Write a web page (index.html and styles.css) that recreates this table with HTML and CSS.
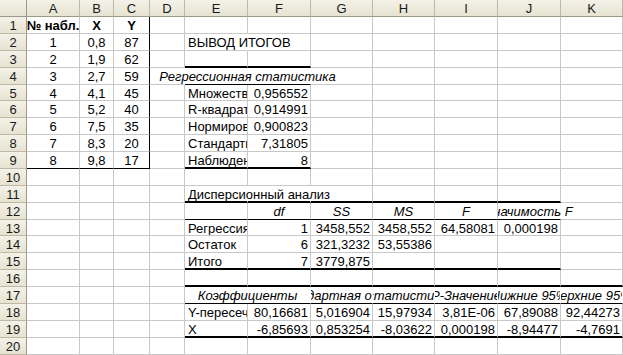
FILE: index.html
```html
<!DOCTYPE html>
<html lang="ru">
<head>
<meta charset="utf-8">
<title>Регрессия</title>
<link rel="stylesheet" href="styles.css">
</head>
<body>
<div class="sheet">
  <div class="corner"></div>
  <div class="h">A</div><div class="h">B</div><div class="h">C</div><div class="h">D</div><div class="h">E</div><div class="h">F</div><div class="h">G</div><div class="h">H</div><div class="h">I</div><div class="h">J</div><div class="h">K</div>

  <div class="rh">1</div>
  <div class="c m b">№ набл.</div><div class="c m b">X</div><div class="c m b kR">Y</div><div class="c"></div><div class="c"></div><div class="c"></div><div class="c"></div><div class="c"></div><div class="c"></div><div class="c"></div><div class="c"></div>

  <div class="rh">2</div>
  <div class="c m">1</div><div class="c m">0,8</div><div class="c m kR">87</div><div class="c"></div><div class="c ov nr">ВЫВОД ИТОГОВ</div><div class="c"></div><div class="c"></div><div class="c"></div><div class="c"></div><div class="c"></div><div class="c"></div>

  <div class="rh">3</div>
  <div class="c m">2</div><div class="c m">1,9</div><div class="c m kR">62</div><div class="c"></div><div class="c tB"></div><div class="c tB"></div><div class="c"></div><div class="c"></div><div class="c"></div><div class="c"></div><div class="c"></div>

  <div class="rh">4</div>
  <div class="c m">3</div><div class="c m">2,7</div><div class="c m kR">59</div><div class="c nr"></div><div class="c m it ov nr kB span2">Регрессионная статистика</div><div class="c"></div><div class="c"></div><div class="c"></div><div class="c"></div><div class="c"></div>

  <div class="rh">5</div>
  <div class="c m">4</div><div class="c m">4,1</div><div class="c m kR">45</div><div class="c"></div><div class="c">Множественный R</div><div class="c r">0,956552</div><div class="c"></div><div class="c"></div><div class="c"></div><div class="c"></div><div class="c"></div>

  <div class="rh">6</div>
  <div class="c m">5</div><div class="c m">5,2</div><div class="c m kR">40</div><div class="c"></div><div class="c">R-квадрат</div><div class="c r">0,914991</div><div class="c"></div><div class="c"></div><div class="c"></div><div class="c"></div><div class="c"></div>

  <div class="rh">7</div>
  <div class="c m">6</div><div class="c m">7,5</div><div class="c m kR">35</div><div class="c"></div><div class="c">Нормированный R-квадрат</div><div class="c r">0,900823</div><div class="c"></div><div class="c"></div><div class="c"></div><div class="c"></div><div class="c"></div>

  <div class="rh">8</div>
  <div class="c m">7</div><div class="c m">8,3</div><div class="c m kR">20</div><div class="c"></div><div class="c">Стандартная ошибка</div><div class="c r">7,31805</div><div class="c"></div><div class="c"></div><div class="c"></div><div class="c"></div><div class="c"></div>

  <div class="rh">9</div>
  <div class="c m kB">8</div><div class="c m kB">9,8</div><div class="c m kR kB">17</div><div class="c"></div><div class="c tB">Наблюдения</div><div class="c r tB">8</div><div class="c"></div><div class="c"></div><div class="c"></div><div class="c"></div><div class="c"></div>

  <div class="rh">10</div>
  <div class="c"></div><div class="c"></div><div class="c"></div><div class="c"></div><div class="c"></div><div class="c"></div><div class="c"></div><div class="c"></div><div class="c"></div><div class="c"></div><div class="c"></div>

  <div class="rh">11</div>
  <div class="c"></div><div class="c"></div><div class="c"></div><div class="c"></div><div class="c ov nr tB">Дисперсионный анализ</div><div class="c nr tB"></div><div class="c tB"></div><div class="c tB"></div><div class="c tB"></div><div class="c tB"></div><div class="c"></div>

  <div class="rh">12</div>
  <div class="c"></div><div class="c"></div><div class="c"></div><div class="c"></div><div class="c kB"></div><div class="c m it kB">df</div><div class="c m it kB">SS</div><div class="c m it kB">MS</div><div class="c m it kB">F</div><div class="c m it kB ovr nr">Значимость F</div><div class="c"></div>

  <div class="rh">13</div>
  <div class="c"></div><div class="c"></div><div class="c"></div><div class="c"></div><div class="c">Регрессия</div><div class="c r">1</div><div class="c r">3458,552</div><div class="c r">3458,552</div><div class="c r">64,58081</div><div class="c r">0,000198</div><div class="c"></div>

  <div class="rh">14</div>
  <div class="c"></div><div class="c"></div><div class="c"></div><div class="c"></div><div class="c">Остаток</div><div class="c r">6</div><div class="c r">321,3232</div><div class="c r">53,55386</div><div class="c"></div><div class="c"></div><div class="c"></div>

  <div class="rh">15</div>
  <div class="c"></div><div class="c"></div><div class="c"></div><div class="c"></div><div class="c tB">Итого</div><div class="c r tB">7</div><div class="c r tB">3779,875</div><div class="c tB"></div><div class="c tB"></div><div class="c tB"></div><div class="c"></div>

  <div class="rh">16</div>
  <div class="c"></div><div class="c"></div><div class="c"></div><div class="c"></div><div class="c tB"></div><div class="c tB"></div><div class="c tB"></div><div class="c tB"></div><div class="c tB"></div><div class="c tB"></div><div class="c tB"></div>

  <div class="rh">17</div>
  <div class="c"></div><div class="c"></div><div class="c"></div><div class="c"></div><div class="c m it nr kB span2">Коэффициенты</div><div class="c m it nr kB">Стандартная ошибка</div><div class="c m it nr kB">t-статистика</div><div class="c m it nr kB">P-Значение</div><div class="c m it nr kB">Нижние 95%</div><div class="c m it nr kB">Верхние 95%</div>

  <div class="rh">18</div>
  <div class="c"></div><div class="c"></div><div class="c"></div><div class="c"></div><div class="c">Y-пересечение</div><div class="c r">80,16681</div><div class="c r">5,016904</div><div class="c r">15,97934</div><div class="c r">3,81E-06</div><div class="c r">67,89088</div><div class="c r">92,44273</div>

  <div class="rh">19</div>
  <div class="c"></div><div class="c"></div><div class="c"></div><div class="c"></div><div class="c tB">X</div><div class="c r tB">-6,85693</div><div class="c r tB">0,853254</div><div class="c r tB">-8,03622</div><div class="c r tB">0,000198</div><div class="c r tB">-8,94477</div><div class="c r tB">-4,7691</div>

  <div class="rh">20</div>
  <div class="c"></div><div class="c"></div><div class="c"></div><div class="c"></div><div class="c"></div><div class="c"></div><div class="c"></div><div class="c"></div><div class="c"></div><div class="c"></div><div class="c"></div>
</div>
</body>
</html>
```

FILE: styles.css
```css
html, body {
  margin: 0;
  padding: 0;
  background: #ffffff;
  overflow: hidden;
}

.sheet {
  display: grid;
  grid-template-columns: 27px 53px 34px 36px 35px 63px 63px 62px 62px 63px 63px 62px;
  grid-template-rows: 17px repeat(4, 17px) 16px repeat(7, 17px) 16px repeat(7, 17px);
  font-family: "Liberation Sans", Arial, sans-serif;
  font-size: 13px;
  color: #000;
}

.sheet > div {
  box-sizing: border-box;
  white-space: nowrap;
}

.corner,
.h,
.rh {
  background: linear-gradient(#f4f2e8, #e6e3d2);
  border-right: 1px solid #bdb9a6;
  border-bottom: 1px solid #bdb9a6;
  display: flex;
  justify-content: center;
  line-height: 16px;
  padding-top: 1px;
  color: #1a1a1a;
}

.corner {
  border-right-color: #9d9987;
  border-bottom-color: #9d9987;
}

.h {
  border-bottom-color: #9d9987;
}

.rh {
  border-right-color: #9d9987;
}

.c {
  display: flex;
  justify-content: flex-start;
  align-items: flex-start;
  line-height: 16px;
  padding: 1px 2px 0 3px;
  border-right: 1px solid #c8c8c8;
  border-bottom: 1px solid #c8c8c8;
  overflow: hidden;
  min-width: 0;
}

.r {
  justify-content: flex-end;
  padding-right: 2px;
}

.m {
  justify-content: center;
  padding-left: 2px;
  padding-right: 2px;
}

.b {
  font-weight: bold;
}

.it {
  font-style: italic;
}

.ov {
  overflow: visible;
  position: relative;
  z-index: 1;
}

.ovr {
  overflow: visible;
  clip-path: inset(0 -200px 0 0);
  position: relative;
  z-index: 1;
}

.nr {
  border-right-color: #ffffff;
}

.kR {
  border-right-color: #000000;
}

.kB {
  border-bottom-color: #000000;
}

.tB {
  border-bottom: 2px solid #000000;
}

.span2 {
  grid-column: span 2;
}
```
